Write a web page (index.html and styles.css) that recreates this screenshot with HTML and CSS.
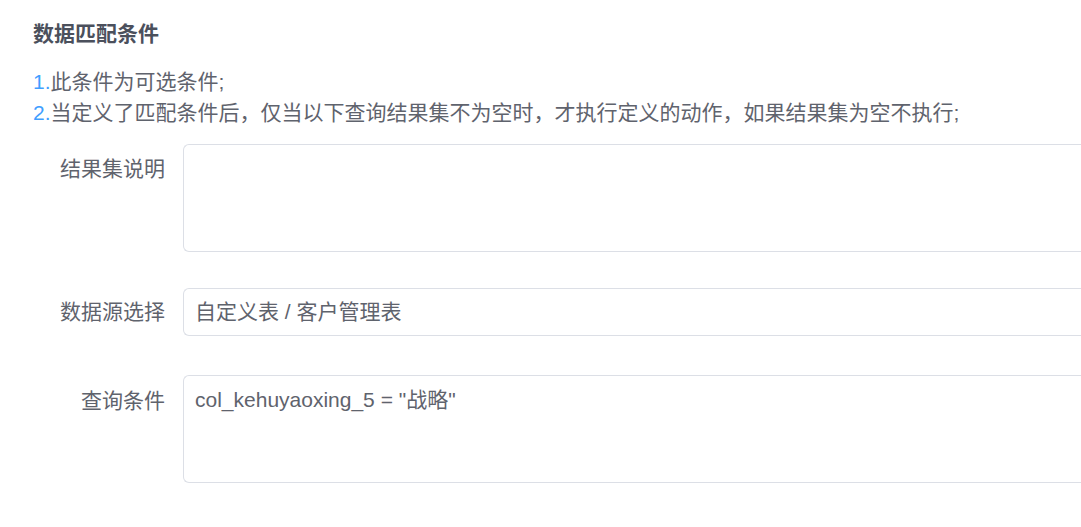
FILE: index.html
```html
<!DOCTYPE html>
<html lang="zh-CN">
<head>
<meta charset="utf-8">
<title>数据匹配条件</title>
<link rel="stylesheet" href="styles.css">
</head>
<body>
<div class="page">
  <h3 class="title">数据匹配条件</h3>
  <div class="tips">
    <p><span class="num">1.</span>此条件为可选条件;</p>
    <p><span class="num">2.</span>当定义了匹配条件后，仅当以下查询结果集不为空时，才执行定义的动作，如果结果集为空不执行;</p>
  </div>
  <form class="form">
    <div class="row row-area">
      <label class="label">结果集说明</label>
      <div class="control"><textarea class="area"></textarea></div>
    </div>
    <div class="row row-select">
      <label class="label">数据源选择</label>
      <div class="control"><div class="select">自定义表 / 客户管理表</div></div>
    </div>
    <div class="row row-area2">
      <label class="label">查询条件</label>
      <div class="control"><textarea class="area">col_kehuyaoxing_5 = "战略"</textarea></div>
    </div>
  </form>
</div>
</body>
</html>
```

FILE: styles.css
```css
html, body {
  margin: 0;
  padding: 0;
  background: #ffffff;
  overflow: hidden;
}
body {
  width: 1081px;
  height: 527px;
  font-family: "Liberation Sans", "Noto Sans CJK SC", sans-serif;
  font-size: 21px;
  line-height: 31.5px;
  color: #5f636d;
}
.page {
  padding: 18px 0 0 33px;
}
.title {
  margin: 0;
  font-size: 21px;
  font-weight: bold;
  line-height: 31.5px;
  color: #4b505c;
}
.tips {
  margin-top: 16px;
  color: #5f636d;
}
.tips p {
  margin: 0;
  white-space: nowrap;
}
.num {
  color: #409eff;
}
.form {
  margin-top: 15px;
}
.row {
  display: flex;
  align-items: flex-start;
}
.label {
  flex: none;
  width: 150px;
  text-align: right;
  padding-right: 18px;
  box-sizing: border-box;
  color: #5f636d;
}
.row-area .label { padding-top: 9px; }
.row-select .label { padding-top: 8px; }
.row-area2 .label { padding-top: 10px; }
.control {
  flex: 1;
  min-width: 0;
}
.area {
  display: block;
  width: 100%;
  height: 108px;
  box-sizing: border-box;
  border: 1px solid #dcdfe6;
  border-right: none;
  border-radius: 6px 0 0 6px;
  padding: 8px 11px;
  font: inherit;
  color: #5f636d;
  resize: none;
  outline: none;
  background: #fff;
}
.select {
  height: 48px;
  box-sizing: border-box;
  border: 1px solid #dcdfe6;
  border-right: none;
  border-radius: 6px 0 0 6px;
  padding: 0 11px;
  line-height: 46px;
  color: #5f636d;
}
.row-area { margin-bottom: 36px; }
.row-select { margin-bottom: 39px; }
```
